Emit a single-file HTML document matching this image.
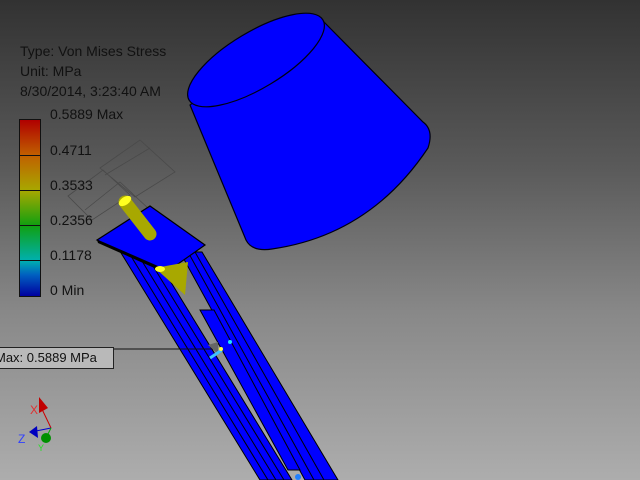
<!DOCTYPE html>
<html><head><style>
html,body{margin:0;padding:0}
body{width:640px;height:480px;overflow:hidden;position:relative;background:linear-gradient(#323232 0%,#5a5a5a 35%,#888 65%,#adadad 100%);font-family:"Liberation Sans",sans-serif}
.t{position:absolute;left:20px;font-size:14px;color:#111;white-space:nowrap}
.l{position:absolute;left:50px;font-size:14px;color:#111}
#bar{position:absolute;left:19px;top:119px;width:20px;height:176px;border:1px solid #111;background:linear-gradient(#b00000,#c06000 20%,#a8a800 40%,#10a010 60%,#00b0b0 80%,#0060c0 88%,#0000a0)}
#bar div{position:absolute;left:0;width:20px;height:1px;background:#111}
#max{position:absolute;left:-1px;top:347px;width:113px;height:20px;border:1px solid #222;background:#b9b9b9;font-size:13px;color:#111;line-height:20px;text-indent:-5px}
</style></head><body>
<svg width="640" height="480" style="position:absolute;left:0;top:0">
<path d="M190,105 L246,240 Q252,252 272,249 Q370,235 428,148 Q434,130 423,122 L322,20 L300,14 Z" fill="#0000ff" stroke="#001" stroke-width="1.2"/>
<ellipse cx="256" cy="60" rx="78" ry="28" transform="rotate(-31 256 60)" fill="#0000ff" stroke="#001" stroke-width="1.2"/>
<g fill="none" stroke="#4a4a4a" stroke-width="0.8">
<path d="M100,168 L140,140 L175,172 L135,197 Z M68,196 L103,170 L130,195 L92,220 Z M105,175 L150,148 M85,210 L120,182 L150,210"/>
<path d="M180,330 L205,350 L230,340 M230,430 L265,465 M215,385 L255,440"/>
</g>
<g stroke="#000" stroke-width="1">
<polygon points="118,248 150,248 292,480 260,480" fill="#0000ff"/>
<polygon points="180,252 202,252 338,480 305,480" fill="#0000ff"/>
<polygon points="200,310 214,310 300,470 288,470" fill="#0000ff"/>
<line x1="126" y1="248" x2="268" y2="480"/>
<line x1="134" y1="248" x2="276" y2="480"/>
<line x1="142" y1="248" x2="284" y2="480"/>
<line x1="188" y1="252" x2="314" y2="480"/>
<line x1="195" y1="252" x2="324" y2="480"/>
</g>
<polygon points="97,240 150,206 205,245 168,271" fill="#0000ff" stroke="#000" stroke-width="1.2"/>
<polygon points="98,243 168,274 168,271 97,240" fill="#000"/>
<line x1="125" y1="202" x2="150" y2="234" stroke="#a8a800" stroke-width="13" stroke-linecap="round"/>
<ellipse cx="125" cy="201" rx="7" ry="4" transform="rotate(-35 125 201)" fill="#ffff20"/>
<polygon points="155,268 188,262 185,295" fill="#a8a800"/>
<ellipse cx="160" cy="269" rx="5" ry="3" fill="#ffff20"/>
<line x1="40" y1="349" x2="215" y2="349" stroke="#111"/>
<polygon points="208,345 218,342 218,354" fill="#666"/>
<path d="M210,358 L222,350" stroke="#40c0ff" stroke-width="3"/>
<circle cx="221" cy="349" r="2" fill="#ffff40"/>
<circle cx="230" cy="342" r="2" fill="#20e0ff"/>
<circle cx="298" cy="477" r="3" fill="#2080ff"/>
<line x1="40" y1="405" x2="51" y2="428" stroke="#c00"/>
<line x1="51" y1="428" x2="36" y2="431" stroke="#00c"/>
<line x1="51" y1="428" x2="46" y2="438" stroke="#0a0"/>
<polygon points="39,397 48,408 39,413" fill="#c00000"/>
<polygon points="29,432 37,426 38,438" fill="#0000c0"/>
<circle cx="46" cy="438" r="5" fill="#009000"/>
<text x="30" y="414" font-size="12" fill="#e03030" font-family="Liberation Sans">X</text>
<text x="18" y="443" font-size="12" fill="#3040ff" font-family="Liberation Sans">Z</text>
<text x="38" y="451" font-size="9" fill="#20e020" font-family="Liberation Sans">Y</text>
</svg>
<div class="t" style="top:43px">Type: Von Mises Stress</div>
<div class="t" style="top:63px">Unit: MPa</div>
<div class="t" style="top:83px">8/30/2014, 3:23:40 AM</div>
<div id="bar"><div style="top:35px"></div><div style="top:70px"></div><div style="top:105px"></div><div style="top:140px"></div></div>
<div class="l" style="top:106px">0.5889 Max</div>
<div class="l" style="top:142px">0.4711</div>
<div class="l" style="top:177px">0.3533</div>
<div class="l" style="top:212px">0.2356</div>
<div class="l" style="top:247px">0.1178</div>
<div class="l" style="top:282px">0 Min</div>
<div id="max">Max: 0.5889 MPa</div>
</body></html>
